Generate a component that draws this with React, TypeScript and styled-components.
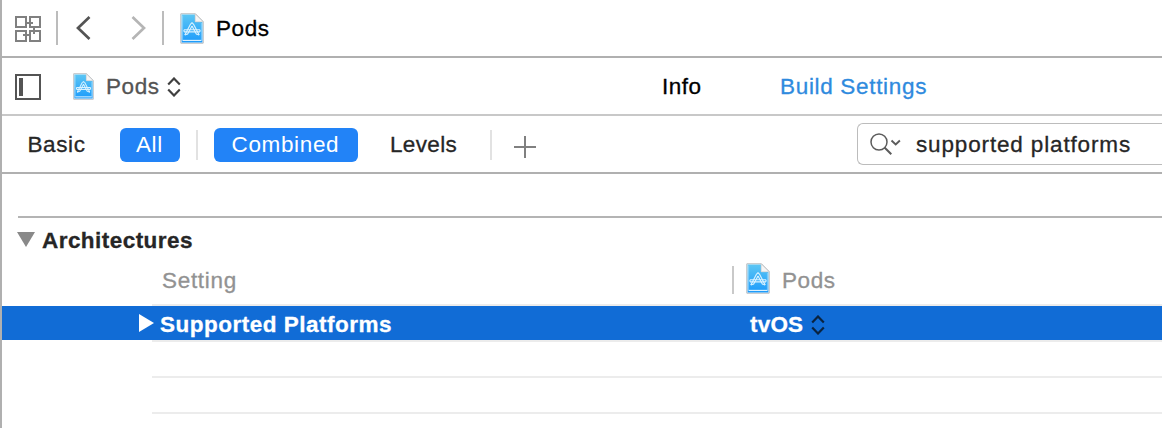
import React from "react";
import styled, { createGlobalStyle } from "styled-components";

const GlobalStyle = createGlobalStyle`
  html, body { margin: 0; padding: 0; background: #fff; overflow: hidden; }
  * { box-sizing: border-box; }
  svg { display: block; flex: none; }
`;

const Window = styled.div`
  width: 100%;
  height: 428px;
  border-left: 2px solid #b0b0b0;
  background: #fff;
  overflow: hidden;
  font-family: "Liberation Sans", Arial, sans-serif;
  font-size: 22.5px;
  line-height: 24px;
`;

const Bar = styled.div<{ $line: string }>`
  display: flex;
  align-items: center;
  height: 58px;
  border-bottom: 2px solid ${(p) => p.$line};
`;

const Item = styled.div<{ $gap?: number; $top?: number }>`
  flex: none;
  margin-left: ${(p) => p.$gap ?? 0}px;
  margin-top: ${(p) => p.$top ?? 0}px;
`;

const Label = styled.div<{ $w?: number; $gap?: number; $color?: string; $track?: number; $bold?: boolean }>`
  flex: none;
  width: ${(p) => (p.$w ? `${p.$w}px` : "auto")};
  margin-left: ${(p) => p.$gap ?? 0}px;
  padding-top: 2px;
  color: ${(p) => p.$color ?? "#262626"};
  letter-spacing: ${(p) => p.$track ?? 0.6}px;
  font-weight: ${(p) => (p.$bold ? 700 : 400)};
  -webkit-text-stroke: 0.3px currentColor;
  white-space: nowrap;
`;

const Separator = styled.div<{ $gap: number; $h: number; $top?: number; $color: string }>`
  flex: none;
  width: 2px;
  height: ${(p) => p.$h}px;
  margin-left: ${(p) => p.$gap}px;
  margin-top: ${(p) => p.$top ?? 0}px;
  background: ${(p) => p.$color};
`;

const Pill = styled.div<{ $w: number; $gap: number; $pad: number; $track: number }>`
  flex: none;
  width: ${(p) => p.$w}px;
  height: 34px;
  margin: 2px 0 0 ${(p) => p.$gap}px;
  padding: 5px 0 5px ${(p) => p.$pad}px;
  border-radius: 6px;
  background: #2283f7;
  color: #fff;
  letter-spacing: ${(p) => p.$track}px;
  white-space: nowrap;
`;

const SearchField = styled.div`
  display: flex;
  flex: 1;
  align-items: center;
  height: 42px;
  margin-left: 321px;
  padding-left: 12px;
  border: 1.5px solid #bcbcbc;
  border-right: 0;
  border-radius: 6px 0 0 6px;
`;

const Section = styled.div`
  display: flex;
  align-items: flex-start;
  height: 46px;
  margin: 42px 0 0 16px;
  padding-top: 9px;
  border-top: 2px solid #b4b4b4;
`;

const ColumnHeader = styled.div`
  display: flex;
  align-items: center;
  height: 42px;
  padding-bottom: 6px;
`;

const Rule = styled.div`
  height: 2px;
  margin-left: 150px;
  background: #ececec;
`;

const SelectedRow = styled.div`
  display: flex;
  align-items: center;
  height: 34px;
  padding-top: 2px;
  background: #116cd6;
`;

const EmptyRow = styled.div`
  height: 34px;
`;

const ProjectIcon = ({ w, h }: { w: number; h: number }) => (
  <svg width={w} height={h} viewBox="0 0 24 31" preserveAspectRatio="none">
    <defs>
      <linearGradient id="paper" x1="0" y1="0" x2="0" y2="1">
        <stop offset="0" stopColor="#5cc6f4" />
        <stop offset="1" stopColor="#1c9bfb" />
      </linearGradient>
    </defs>
    <path d="M.8.8H15.5L23.2 8.5V30.2H.8Z" fill="#fff" stroke="#b5b9bc" strokeWidth="1" />
    <path d="M1.6 1.6H15V9H22.4V29.4H1.6Z" fill="url(#paper)" />
    <path d="M2.5 27.4H21.5" stroke="#e6f6ff" strokeWidth="1.1" />
    <path d="M2.6 2.5V27M21.4 10V27" stroke="#a6defb" strokeWidth=".6" />
    <path d="M15.2 1V8.8H23Z" fill="#f5f5f5" stroke="#c4c8ca" strokeWidth=".7" />
    <g fill="none" stroke="#d9f2ff" strokeWidth="1.15">
      <path d="M10.6 11L4.8 22M13.4 11L19.2 22M12 13L7.4 21.5M12 13L16.6 21.5" />
      <path d="M10.6 11L12 9.8L13.4 11M4 16.7H20M4 18.8H20M4 16.7V18.8M20 16.7V18.8M4.8 22L7.4 21M19.2 22L16.6 21" />
    </g>
  </svg>
);

const Stepper = ({ color }: { color: string }) => (
  <svg width="14" height="20" viewBox="0 0 14 20" fill="none" stroke={color} strokeWidth="2.2">
    <path d="M1.2 7.4L7 1.5L12.8 7.4M1.2 12.6L7 18.5L12.8 12.6" />
  </svg>
);

const RelatedItemsIcon = () => (
  <svg width="26" height="26" viewBox="0 0 26 26" fill="none" stroke="#808080" strokeWidth="2">
    <path d="M1 1H11V11H1ZM15 1H25V11H15ZM1 15H11V25H1ZM15 15H25V25H15Z" />
    <path d="M11 7H18M19 11V18M8 19H15" />
  </svg>
);

const Chevron = ({ color, flip }: { color: string; flip?: boolean }) => (
  <svg width="16" height="24" viewBox="0 0 16 24" fill="none" stroke={color} strokeWidth="2.7">
    <path d={flip ? "M1.5 1L13 12L1.5 23" : "M13.5 1L2 12L13.5 23"} />
  </svg>
);

const PanelIcon = () => (
  <svg width="26" height="26" viewBox="0 0 26 26">
    <path d="M1 1H25V25H1Z" fill="none" stroke="#545454" strokeWidth="2" />
    <path d="M4 4H8V22H4Z" fill="#545454" />
  </svg>
);

const SearchIcon = () => (
  <svg width="31" height="23" viewBox="0 0 31 23" fill="none" stroke="#5c5c5c">
    <circle cx="9" cy="9" r="8" strokeWidth="1.5" />
    <path d="M14.5 14.5L21.3 21.3" strokeWidth="2" />
    <path d="M21.5 7.5L25.7 11.5L29.9 7.5" strokeWidth="1.9" />
  </svg>
);

export default function App() {
  return (
    <>
      <GlobalStyle />
      <Window>
        <Bar $line="#b0b0b0">
          <Item $gap={13} $top={2}><RelatedItemsIcon /></Item>
          <Separator $gap={15} $h={34} $color="#bcbcbc" />
          <Item $gap={17.5}><Chevron color="#545454" /></Item>
          <Item $gap={39.5}><Chevron color="#b5b5b5" flip /></Item>
          <Separator $gap={15} $h={34} $color="#bcbcbc" />
          <Item $gap={16}><ProjectIcon w={24} h={31} /></Item>
          <Label $gap={12} $color="#000">Pods</Label>
        </Bar>
        <Bar $line="#c8c8c8">
          <Item $gap={13} $top={2}><PanelIcon /></Item>
          <Item $gap={32}><ProjectIcon w={21} h={27} /></Item>
          <Label $gap={12} $w={61} $color="#545454">Pods</Label>
          <Item $top={2}><Stepper color="#404040" /></Item>
          <Label $gap={481} $w={118} $color="#000" $track={0.5}>Info</Label>
          <Label $color="#2e8ade" $track={0.68}>Build Settings</Label>
        </Bar>
        <Bar $line="#b0b0b0">
          <Label $gap={25.5} $w={92.5} $track={0.6}>Basic</Label>
          <Pill $w={60} $gap={0} $pad={16} $track={0.6}>All</Pill>
          <Separator $gap={16} $h={30} $top={2} $color="#e2e2e2" />
          <Pill $w={144} $gap={16} $pad={17.5} $track={0.65}>Combined</Pill>
          <Label $gap={32} $w={100} $track={0.35}>Levels</Label>
          <Separator $gap={0} $h={30} $top={2} $color="#e2e2e2" />
          <Item $gap={22} $top={6}>
            <svg width="22" height="22" viewBox="0 0 22 22" stroke="#808080" strokeWidth="2">
              <path d="M0 11H22M11 0V22" />
            </svg>
          </Item>
          <SearchField>
            <SearchIcon />
            <Label $gap={15} $track={0.85}>supported platforms</Label>
          </SearchField>
        </Bar>
        <Section>
          <Item $gap={-1} $top={5}>
            <svg width="18" height="15" viewBox="0 0 18 15"><path d="M0 0H18L9 15Z" fill="#898989" /></svg>
          </Item>
          <Label $gap={7} $bold $track={0.45}>Architectures</Label>
        </Section>
        <ColumnHeader>
          <Label $gap={160} $w={570} $color="#929292" $track={0.7}>Setting</Label>
          <Separator $gap={0} $h={28} $color="#c9c9c9" />
          <Item $gap={12} $top={-3}><ProjectIcon w={24} h={31} /></Item>
          <Label $gap={12} $color="#929292">Pods</Label>
        </ColumnHeader>
        <Rule />
        <SelectedRow>
          <Item $gap={137} $top={-2}>
            <svg width="15" height="18" viewBox="0 0 15 18"><path d="M0 0L15 9L0 18Z" fill="#fff" /></svg>
          </Item>
          <Label $gap={6} $w={590} $color="#fff" $bold $track={0.5}>Supported Platforms</Label>
          <Label $w={61} $color="#fff" $bold $track={0.2}>tvOS</Label>
          <Item $top={1}><Stepper color="#0a2340" /></Item>
        </SelectedRow>
        <Rule />
        <EmptyRow />
        <Rule />
        <EmptyRow />
        <Rule />
      </Window>
    </>
  );
}
